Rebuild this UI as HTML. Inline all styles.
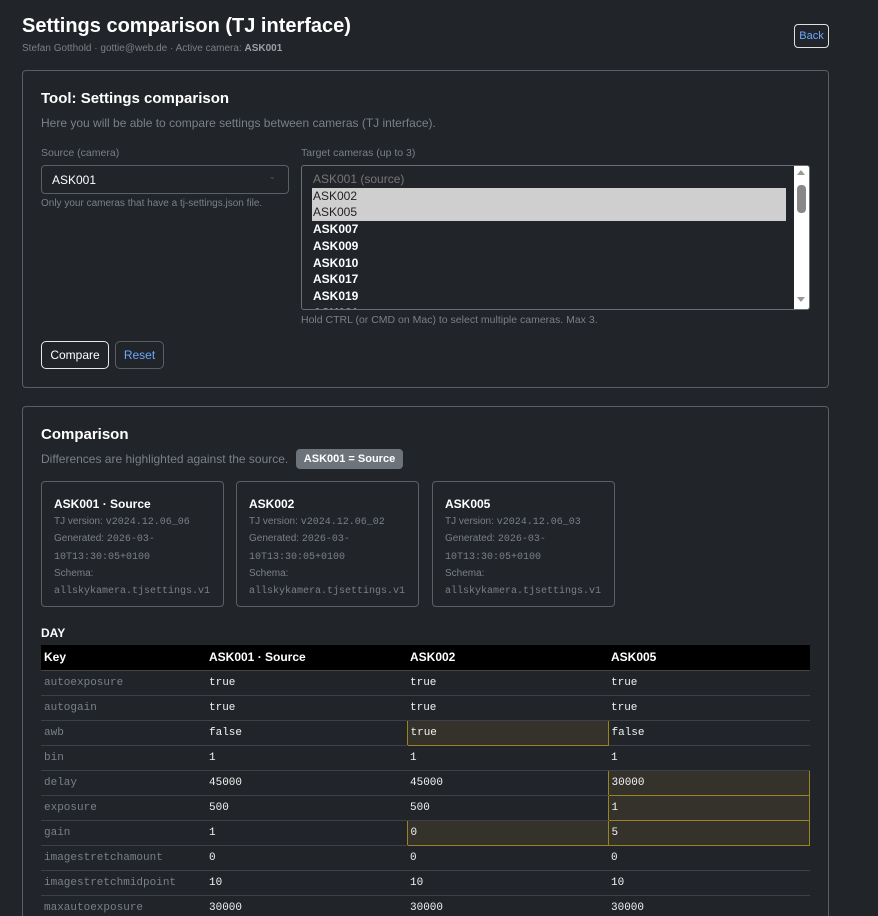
<!DOCTYPE html>
<html style="background:#212429;overflow:hidden"><head><meta charset="utf-8"><style>
*{box-sizing:border-box;margin:0;padding:0}
html,body{width:878px;height:916px;overflow:hidden;background:#212429}
body{color:#e9ecef;font-family:"Liberation Sans",sans-serif;position:relative}
.a{position:absolute;white-space:nowrap}
.mut{color:#7a8088}
.card{position:absolute;border:1px solid #5a5f66;border-radius:4px;background:#212429}
.mono{font-family:"Liberation Mono",monospace}
.mc{position:absolute;top:481px;height:126px;width:183px;border:1px solid #5a5f66;border-radius:4px;padding:14px 12px;font-size:10px;line-height:16.5px;color:#7a8088}
.mc b{display:block;color:#fff;font-size:12px;margin-bottom:1px}
.mc .mono{font-size:10px}
table{position:absolute;left:41px;top:645px;width:769px;border-collapse:collapse;font-size:11px}
th{background:#000;color:#fff;text-align:left;height:25px;padding:0 3px;font-size:12px;border-bottom:1px solid #444}
td{height:25px;padding:0 3px;border-bottom:1px solid #3d4147;font-family:"Liberation Mono",monospace;color:#f2f2f2}
td:first-child{color:#7a8088}
td.d{background:#34322a;border:1px solid #9a8420}
</style></head><body>
<div class="a" style="left:22px;top:15px;font-size:20px;font-weight:bold;color:#fff">Settings comparison (TJ interface)</div>
<div class="a mut" style="left:22px;top:43px;font-size:10px">Stefan Gotthold · gottie@web.de · Active camera: <b style="color:#9aa0a6">ASK001</b></div>
<div class="a" style="left:794px;top:24px;width:35px;height:24px;border:1px solid #e0e0e0;border-radius:4px;color:#6ea8fe;font-size:11px;text-align:center;line-height:22px">Back</div>

<div class="card" style="left:22px;top:70px;width:807px;height:318px"></div>
<div class="a" style="left:41px;top:90px;font-size:15px;font-weight:bold;color:#fff">Tool: Settings comparison</div>
<div class="a mut" style="left:41px;top:116px;font-size:12px">Here you will be able to compare settings between cameras (TJ interface).</div>
<div class="a mut" style="left:41px;top:147px;font-size:10.5px">Source (camera)</div>
<div class="a" style="left:41px;top:165px;width:248px;height:29px;border:1px solid #5a5f66;border-radius:4px;padding:7px 10px;font-size:12px;color:#fff">ASK001<span style="position:absolute;right:12px;top:5px;color:#555;font-size:9px">⌄</span></div>
<div class="a mut" style="left:41px;top:198px;font-size:10px">Only your cameras that have a tj-settings.json file.</div>
<div class="a mut" style="left:301px;top:147px;font-size:10.5px">Target cameras (up to 3)</div>
<div class="a" style="left:301px;top:165px;width:509px;height:145px;border:1px solid #6a6f76;border-radius:3px;overflow:hidden;font-size:12px;line-height:16.7px">
<div style="position:absolute;left:10px;top:5px;width:474px">
<div style="color:#777;padding-left:1px">ASK001 (source)</div>
<div style="background:#cfcfcf;color:#222;padding-left:1px">ASK002</div>
<div style="background:#cfcfcf;color:#222;padding-left:1px">ASK005</div>
<div style="color:#fff;font-weight:bold;padding-left:1px">ASK007</div>
<div style="color:#fff;font-weight:bold;padding-left:1px">ASK009</div>
<div style="color:#fff;font-weight:bold;padding-left:1px">ASK010</div>
<div style="color:#fff;font-weight:bold;padding-left:1px">ASK017</div>
<div style="color:#fff;font-weight:bold;padding-left:1px">ASK019</div>
<div style="color:#fff;font-weight:bold;padding-left:1px">ASK021</div>
</div>
<div style="position:absolute;right:0;top:0;width:15px;height:143px;background:#fff">
<div style="position:absolute;left:3px;top:4px;border:4px solid transparent;border-bottom:5px solid #999;border-top:0"></div>
<div style="position:absolute;left:3px;top:19px;width:9px;height:28px;background:#888;border-radius:4px"></div>
<div style="position:absolute;left:3px;top:131px;border:4px solid transparent;border-top:5px solid #999;border-bottom:0"></div>
</div></div>
<div class="a mut" style="left:301px;top:314px;font-size:10.5px">Hold CTRL (or CMD on Mac) to select multiple cameras. Max 3.</div>
<div class="a" style="left:41px;top:341px;width:68px;height:28px;border:1px solid #e8e8e8;border-radius:5px;font-size:12px;color:#fff;text-align:center;line-height:26px">Compare</div>
<div class="a" style="left:115px;top:341px;width:49px;height:28px;border:1px solid #5a5f66;border-radius:5px;font-size:12px;color:#6ea8fe;text-align:center;line-height:26px">Reset</div>

<div class="card" style="left:22px;top:406px;width:807px;height:520px"></div>
<div class="a" style="left:41px;top:426px;font-size:15px;font-weight:bold;color:#fff">Comparison</div>
<div class="a mut" style="left:41px;top:452px;font-size:12px">Differences are highlighted against the source.</div>
<div class="a" style="left:296px;top:449px;width:107px;height:20px;background:#6c737b;border-radius:4px;color:#fff;font-weight:bold;font-size:11px;text-align:center;line-height:20px">ASK001 = Source</div>
<div class="mc" style="left:41px"><b>ASK001 · Source</b>TJ version: <span class="mono">v2024.12.06_06</span><br>Generated: <span class="mono">2026-03-<br>10T13:30:05+0100</span><br>Schema:<br><span class="mono">allskykamera.tjsettings.v1</span></div>
<div class="mc" style="left:236px"><b>ASK002</b>TJ version: <span class="mono">v2024.12.06_02</span><br>Generated: <span class="mono">2026-03-<br>10T13:30:05+0100</span><br>Schema:<br><span class="mono">allskykamera.tjsettings.v1</span></div>
<div class="mc" style="left:432px"><b>ASK005</b>TJ version: <span class="mono">v2024.12.06_03</span><br>Generated: <span class="mono">2026-03-<br>10T13:30:05+0100</span><br>Schema:<br><span class="mono">allskykamera.tjsettings.v1</span></div>
<div class="a" style="left:41px;top:626px;font-size:12px;font-weight:bold;color:#fff">DAY</div>
<table>
<tr><th style="width:165px">Key</th><th style="width:201px">ASK001 · Source</th><th style="width:201px">ASK002</th><th>ASK005</th></tr>
<tr><td>autoexposure</td><td>true</td><td>true</td><td>true</td></tr>
<tr><td>autogain</td><td>true</td><td>true</td><td>true</td></tr>
<tr><td>awb</td><td>false</td><td class="d">true</td><td>false</td></tr>
<tr><td>bin</td><td>1</td><td>1</td><td>1</td></tr>
<tr><td>delay</td><td>45000</td><td>45000</td><td class="d">30000</td></tr>
<tr><td>exposure</td><td>500</td><td>500</td><td class="d">1</td></tr>
<tr><td>gain</td><td>1</td><td class="d">0</td><td class="d">5</td></tr>
<tr><td>imagestretchamount</td><td>0</td><td>0</td><td>0</td></tr>
<tr><td>imagestretchmidpoint</td><td>10</td><td>10</td><td>10</td></tr>
<tr><td>maxautoexposure</td><td>30000</td><td>30000</td><td>30000</td></tr>
</table>
</body></html>
